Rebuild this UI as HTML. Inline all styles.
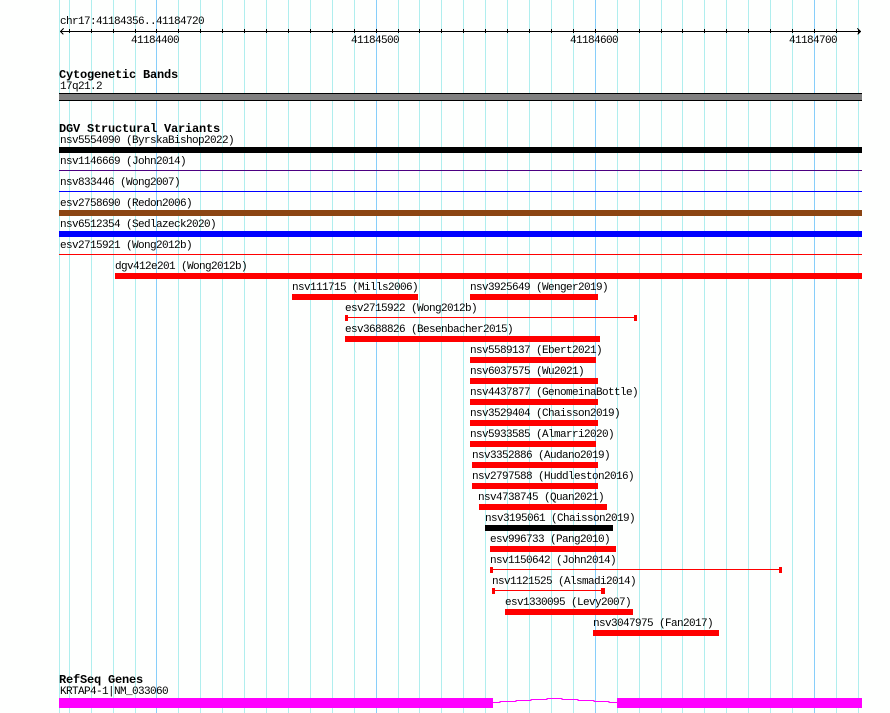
<!DOCTYPE html>
<html>
<head>
<meta charset="utf-8">
<style>
html,body{margin:0;padding:0;background:#fefffe;width:890px;height:713px;overflow:hidden}
svg{display:block}
text{font-family:"Liberation Mono",monospace;font-size:11px;letter-spacing:-0.6px;fill:#000;transform:translateY(-1px)}
text.b{font-weight:bold;font-size:12px;letter-spacing:-0.2px;transform:none}
rect,path.c{shape-rendering:crispEdges}
</style>
</head>
<body>
<svg width="890" height="713" viewBox="0 0 890 713" xmlns="http://www.w3.org/2000/svg">
<path class="c" fill="none" stroke="#afeeee" stroke-width="1" d="M59.5 0V713M69.5 0V713M91.5 0V713M113.5 0V713M135.5 0V713M178.5 0V713M200.5 0V713M222.5 0V713M244.5 0V713M266.5 0V713M288.5 0V713M310.5 0V713M332.5 0V713M354.5 0V713M398.5 0V713M419.5 0V713M441.5 0V713M463.5 0V713M485.5 0V713M507.5 0V713M529.5 0V713M551.5 0V713M573.5 0V713M617.5 0V713M639.5 0V713M661.5 0V713M682.5 0V713M704.5 0V713M726.5 0V713M748.5 0V713M770.5 0V713M792.5 0V713M836.5 0V713M858.5 0V713"/>
<path class="c" fill="none" stroke="#87cefa" stroke-width="1" d="M156.5 0V713M376.5 0V713M595.5 0V713M814.5 0V713"/>

<!-- ruler -->
<text x="60" y="25">chr17:41184356..41184720</text>
<path class="c" fill="none" stroke="#000" d="M60 31.5H861M69.5 29V33M91.5 29V33M113.5 29V33M135.5 29V33M156.5 29V33M178.5 29V33M200.5 29V33M222.5 29V33M244.5 29V33M266.5 29V33M288.5 29V33M310.5 29V33M332.5 29V33M354.5 29V33M376.5 29V33M398.5 29V33M419.5 29V33M441.5 29V33M463.5 29V33M485.5 29V33M507.5 29V33M529.5 29V33M551.5 29V33M573.5 29V33M595.5 29V33M617.5 29V33M639.5 29V33M661.5 29V33M682.5 29V33M704.5 29V33M726.5 29V33M748.5 29V33M770.5 29V33M792.5 29V33M814.5 29V33M836.5 29V33M858.5 29V33"/>
<path class="c" fill="none" stroke="#000" d="M63.5 28.5L60.5 31.5L63.5 34.5M857.5 28.5L860.5 31.5L857.5 34.5"/>
<text x="131" y="44">41184400</text>
<text x="351" y="44">41184500</text>
<text x="570" y="44">41184600</text>
<text x="789" y="44">41184700</text>

<!-- cytogenetic -->
<text class="b" x="59" y="78">Cytogenetic Bands</text>
<text x="60" y="90">17q21.2</text>
<rect x="59" y="93" width="803" height="8" fill="#000"/>
<rect x="59" y="94" width="803" height="6" fill="#808080"/>

<!-- DGV -->
<text class="b" x="59" y="132">DGV Structural Variants</text>
<text x="60" y="144">nsv5554090 (ByrskaBishop2022)</text>
<rect x="59" y="147" width="803" height="6" fill="#000"/>
<text x="60" y="165">nsv1146669 (John2014)</text>
<rect x="59" y="170" width="803" height="1" fill="#4b0082"/>
<text x="60" y="186">nsv833446 (Wong2007)</text>
<rect x="59" y="191" width="803" height="1" fill="#0000ff"/>
<text x="60" y="207">esv2758690 (Redon2006)</text>
<rect x="59" y="210" width="803" height="6" fill="#8b4513"/>
<text x="60" y="228">nsv6512354 (Sedlazeck2020)</text>
<rect x="59" y="231" width="803" height="6" fill="#0000ff"/>
<text x="60" y="249">esv2715921 (Wong2012b)</text>
<rect x="59" y="254" width="803" height="1" fill="#ff0000"/>

<text x="115" y="270">dgv412e201 (Wong2012b)</text>
<rect x="115" y="273" width="747" height="6" fill="#ff0000"/>
<text x="292" y="291">nsv111715 (Mills2006)</text>
<rect x="292" y="294" width="126" height="6" fill="#ff0000"/>
<text x="470" y="291">nsv3925649 (Wenger2019)</text>
<rect x="470" y="294" width="128" height="6" fill="#ff0000"/>
<text x="345" y="312">esv2715922 (Wong2012b)</text>
<rect x="345" y="315" width="3" height="6" fill="#ff0000"/>
<rect x="348" y="317" width="286" height="1" fill="#ff0000"/>
<rect x="634" y="315" width="3" height="6" fill="#ff0000"/>
<text x="345" y="333">esv3688826 (Besenbacher2015)</text>
<rect x="345" y="336" width="255" height="6" fill="#ff0000"/>
<text x="470" y="354">nsv5589137 (Ebert2021)</text>
<rect x="470" y="357" width="126" height="6" fill="#ff0000"/>
<text x="470" y="375">nsv6037575 (Wu2021)</text>
<rect x="470" y="378" width="128" height="6" fill="#ff0000"/>
<text x="470" y="396">nsv4437877 (GenomeinaBottle)</text>
<rect x="470" y="399" width="128" height="6" fill="#ff0000"/>
<text x="470" y="417">nsv3529404 (Chaisson2019)</text>
<rect x="470" y="420" width="128" height="6" fill="#ff0000"/>
<text x="470" y="438">nsv5933585 (Almarri2020)</text>
<rect x="470" y="441" width="126" height="6" fill="#ff0000"/>
<text x="472" y="459">nsv3352886 (Audano2019)</text>
<rect x="472" y="462" width="126" height="6" fill="#ff0000"/>
<text x="472" y="480">nsv2797588 (Huddleston2016)</text>
<rect x="472" y="483" width="126" height="6" fill="#ff0000"/>
<text x="478" y="501">nsv4738745 (Quan2021)</text>
<rect x="479" y="504" width="128" height="6" fill="#ff0000"/>
<text x="485" y="522">nsv3195061 (Chaisson2019)</text>
<rect x="485" y="525" width="128" height="6" fill="#000"/>
<text x="490" y="543">esv996733 (Pang2010)</text>
<rect x="490" y="546" width="126" height="6" fill="#ff0000"/>
<text x="490" y="564">nsv1150642 (John2014)</text>
<rect x="490" y="567" width="3" height="6" fill="#ff0000"/>
<rect x="493" y="569" width="286" height="1" fill="#ff0000"/>
<rect x="779" y="567" width="3" height="6" fill="#ff0000"/>
<text x="492" y="585">nsv1121525 (Alsmadi2014)</text>
<rect x="492" y="588" width="3" height="6" fill="#ff0000"/>
<rect x="495" y="590" width="106" height="1" fill="#ff0000"/>
<rect x="601" y="588" width="4" height="6" fill="#ff0000"/>
<text x="505" y="606">esv1330095 (Levy2007)</text>
<rect x="505" y="609" width="128" height="6" fill="#ff0000"/>
<text x="593" y="627">nsv3047975 (Fan2017)</text>
<rect x="593" y="630" width="126" height="6" fill="#ff0000"/>

<!-- RefSeq -->
<text class="b" x="59" y="683">RefSeq Genes</text>
<text x="60" y="695">KRTAP4-1|NM_033060</text>
<rect x="59" y="698" width="434" height="10" fill="#ff00ff"/>
<rect x="617" y="698" width="245" height="10" fill="#ff00ff"/>
<path class="c" fill="none" stroke="#ff00ff" d="M493 702.5H500V701.5H516V700.5H531V699.5H547V698.5H562V699.5H578V700.5H594V701.5H609V702.5H617"/>
</svg>
</body>
</html>
